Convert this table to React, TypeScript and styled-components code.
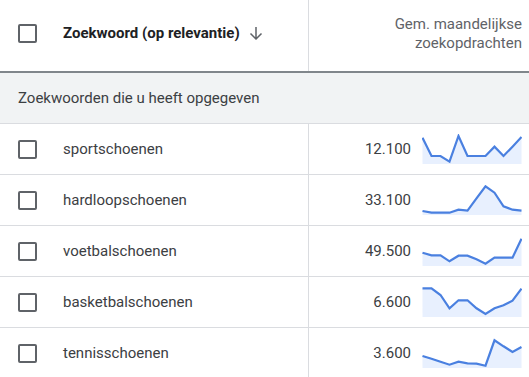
import React from "react";
import styled, { createGlobalStyle } from "styled-components";

const GlobalStyle = createGlobalStyle`
  html, body {
    margin: 0;
    padding: 0;
    background: #ffffff;
    font-family: Roboto, "Liberation Sans", Arial, sans-serif;
    overflow: hidden;
  }
`;

type Keyword = {
  name: string;
  volume: string;
  trend: number[];
};

const keywords: Keyword[] = [
  { name: "sportschoenen", volume: "12.100", trend: [3.7, 22, 22, 27.7, 2, 22, 22, 22, 12.7, 22, 12.7, 3] },
  { name: "hardloopschoenen", volume: "33.100", trend: [26, 27.7, 27.7, 27.7, 24.7, 25.7, 13.3, 1.3, 7.7, 21.3, 24.7, 25.7] },
  { name: "voetbalschoenen", volume: "49.500", trend: [16.7, 19.3, 19.3, 25.3, 19.7, 19.7, 23.3, 27.7, 21.7, 21.7, 21.7, 2.7] },
  { name: "basketbalschoenen", volume: "6.600", trend: [1.3, 1.3, 8, 21.3, 13.3, 13.3, 21.3, 27, 21.3, 18.3, 13.7, 1.7] },
  { name: "tennisschoenen", volume: "3.600", trend: [18, 20.7, 23.7, 26.7, 23.7, 25.3, 25.7, 27.7, 2.3, 8.3, 14, 9] },
];

const Sparkline = ({ values }: { values: number[] }) => {
  const step = 99 / (values.length - 1);
  const pts = values.map((v, i) => `${(i * step + 0.5).toFixed(1)},${v}`);
  const line = pts.join(" ");
  const area = `0.5,30 ${line} 99.5,30`;
  return (
    <svg width="100" height="30" viewBox="0 0 100 30">
      <polygon points={area} fill="#e8f0fe" />
      <polyline
        points={line}
        fill="none"
        stroke="#4a80e0"
        strokeWidth="2.2"
        strokeLinejoin="miter"
      />
    </svg>
  );
};

const SortArrow = () => (
  <svg width="14" height="14" viewBox="0 0 14 14">
    <path
      d="M7 1v12M1.5 7.5L7 13l5.5-5.5"
      fill="none"
      stroke="#5f6368"
      strokeWidth="1.5"
    />
  </svg>
);

const App = () => (
  <>
    <GlobalStyle />
    <Table>
      <HeaderRow>
        <KeywordCell $header>
          <CheckBox />
          <HeaderTitle>Zoekwoord (op relevantie)</HeaderTitle>
          <SortArrow />
        </KeywordCell>
        <HeaderMetric>
          Gem. maandelijkse
          <br />
          zoekopdrachten
        </HeaderMetric>
      </HeaderRow>
      <GroupRow>Zoekwoorden die u heeft opgegeven</GroupRow>
      {keywords.map((k) => (
        <Row key={k.name}>
          <KeywordCell>
            <CheckBox />
            <Name>{k.name}</Name>
          </KeywordCell>
          <MetricCell>
            <Volume>{k.volume}</Volume>
            <Sparkline values={k.trend} />
          </MetricCell>
        </Row>
      ))}
    </Table>
  </>
);

const Table = styled.div`
  width: 529px;
  height: 377px;
  overflow: hidden;
  color: #3c4043;
`;

const HeaderRow = styled.div`
  display: grid;
  grid-template-columns: 309px 1fr;
  height: 71px;
  border-bottom: 2px solid #80868b;
`;

const KeywordCell = styled.div<{ $header?: boolean }>`
  display: flex;
  align-items: center;
  padding-left: 18px;
  padding-bottom: ${(p) => (p.$header ? "5px" : "0")};
  border-right: 1px solid #dadce0;
`;

const CheckBox = styled.span`
  box-sizing: border-box;
  width: 19px;
  height: 19px;
  border: 2px solid #5f6368;
  border-radius: 2px;
  margin-right: 26px;
  flex-shrink: 0;
`;

const HeaderTitle = styled.span`
  font-size: 15px;
  font-weight: 700;
  color: #202124;
  margin-right: 9px;
`;

const HeaderMetric = styled.div`
  display: flex;
  align-items: center;
  justify-content: flex-end;
  text-align: right;
  padding-right: 7px;
  font-size: 15px;
  line-height: 19px;
  color: #5f6368;
  padding-bottom: 4px;
`;

const GroupRow = styled.div`
  height: 50px;
  display: flex;
  align-items: center;
  padding-left: 18px;
  background: #f1f3f4;
  border-bottom: 1px solid #dadce0;
  font-size: 15px;
  color: #3c4043;
`;

const Row = styled.div`
  display: grid;
  grid-template-columns: 309px 1fr;
  height: 50px;
  border-bottom: 1px solid #dadce0;
`;

const Name = styled.span`
  font-size: 15px;
  color: #3c4043;
`;

const MetricCell = styled.div`
  display: flex;
  align-items: center;
  justify-content: flex-end;
  gap: 11px;
  padding-right: 7px;
`;

const Volume = styled.span`
  font-size: 15px;
  color: #3c4043;
`;

export default App;
